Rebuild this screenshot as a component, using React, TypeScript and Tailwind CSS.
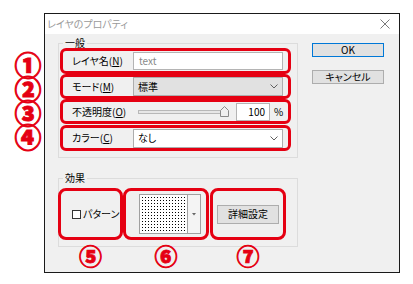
import React from "react";

const RED = "border-[#e50012]";

function Chevron() {
  return (
    <svg width="8" height="5" viewBox="0 0 8 5" className="shrink-0">
      <path d="M0.5 0.5 L4 4 L7.5 0.5" fill="none" stroke="#606060" strokeWidth="1" />
    </svg>
  );
}

function Row({ children, h = 25, extra = "" }: { children: React.ReactNode; h?: number; extra?: string }) {
  return (
    <div
      className={`ml-px w-[231px] border-[3px] ${RED} rounded-[6px] flex items-center pl-[9px] pr-[5px] ${extra}`}
      style={{ height: h }}
    >
      {children}
    </div>
  );
}

export default function App() {
  return (
    <div className="w-[413px] h-[284px] bg-white flex overflow-hidden font-['Noto_Sans_CJK_JP',sans-serif] [font-feature-settings:'palt'] text-[10px] leading-[12px] text-black">
      {/* left annotations */}
      <div className="w-[44px] shrink-0 pt-[53px] pl-[12px] flex flex-col text-[#e50012] font-black text-[27px] leading-[24px] [-webkit-text-stroke:0.9px_#e50012]">
        <div className="h-[24px] text-center">①</div>
        <div className="h-[24px] text-center">②</div>
        <div className="h-[24px] text-center">③</div>
        <div className="h-[24px] text-center">④</div>
      </div>

      {/* dialog */}
      <div className="mt-[13px] w-[356px] h-[260px] shrink-0 border border-[#1a1a1a] flex flex-col bg-[#f0f0f0]">
        <div className="h-[20px] bg-white flex items-center justify-between pl-[2px] pr-[9px]">
          <span className="text-[#9a9a9a]">レイヤのプロパティ</span>
          <svg width="10" height="10" viewBox="0 0 10 10">
            <path d="M0.5 0.5 L9.5 9.5 M9.5 0.5 L0.5 9.5" stroke="#7a7a7a" strokeWidth="1" />
          </svg>
        </div>

        <div className="flex pl-[13px]">
          <div className="w-[240px] shrink-0 flex flex-col pt-[3px]">
            {/* 一般 */}
            <fieldset className="border border-[#dcdcdc] pb-[6px]">
              <legend className="ml-[4px] px-[2px] leading-[12px]">一般</legend>
              <div className="flex flex-col -mt-px">
                <Row h={26}>
                  <div className="w-[61px] shrink-0">
                    レイヤ名(<span className="underline">N</span>)
                  </div>
                  <div className="w-[150px] h-[18px] bg-white border border-[#b4b4b4] flex items-center pl-[5px] text-[#8a8a8a]">
                    text
                  </div>
                </Row>
                <Row>
                  <div className="w-[61px] shrink-0">
                    モード(<span className="underline">M</span>)
                  </div>
                  <div className="w-[150px] h-[19px] bg-[#e1e1e1] border border-[#adadad] flex items-center justify-between pl-[4px] pr-[4px]">
                    <span>標準</span>
                    <Chevron />
                  </div>
                </Row>
                <Row>
                  <div className="w-[61px] shrink-0">
                    不透明度(<span className="underline">O</span>)
                  </div>
                  <div className="w-[150px] flex items-center">
                    <div className="ml-[5px] w-[91px] h-[12px] relative shrink-0">
                      <div className="absolute left-0 top-[4px] w-[88px] h-[4px] border border-[#b8b8b8] bg-[#e7e7e7]" />
                      <svg width="9" height="11" viewBox="0 0 9 11" className="absolute left-[82px] top-0">
                        <path d="M0.5 10.5 L0.5 4.5 L4.5 0.5 L8.5 4.5 L8.5 10.5 Z" fill="#f0f0f0" stroke="#8a8a8a" strokeWidth="1" />
                      </svg>
                    </div>
                    <div className="ml-[7px] w-[34px] h-[18px] shrink-0 bg-white border border-[#b4b4b4] flex items-center justify-end pr-[4px]">
                      100
                    </div>
                    <span className="ml-[4px]">%</span>
                  </div>
                </Row>
                <Row h={26} extra="mt-px">
                  <div className="w-[61px] shrink-0">
                    カラー(<span className="underline">C</span>)
                  </div>
                  <div className="w-[150px] h-[19px] bg-white border border-[#adadad] flex items-center justify-between pl-[4px] pr-[4px]">
                    <span>なし</span>
                    <Chevron />
                  </div>
                </Row>
              </div>
            </fieldset>

            {/* 効果 */}
            <fieldset className="mt-[14px] border border-[#dcdcdc] pb-[6px]">
              <legend className="ml-[4px] px-[2px] leading-[12px]">効果</legend>
              <div className="flex mt-[4px] -ml-px">
                <div className={`w-[65px] h-[52px] border-[3px] ${RED} rounded-[8px] flex items-center pl-[11px]`}>
                  <div className="w-[9px] h-[9px] border border-[#333] bg-white shrink-0" />
                  <span className="ml-[2px]">パターン</span>
                </div>
                <div className={`w-[86px] h-[52px] border-[3px] ${RED} rounded-[8px] flex items-center pl-[13px]`}>
                  <div className="w-[62px] h-[40px] border border-[#a0a0a0] bg-white flex">
                    <svg width="47" height="38" viewBox="0 0 47 38" className="shrink-0">
                      <defs>
                        <pattern id="dots" x="2" y="2" width="3" height="3" patternUnits="userSpaceOnUse">
                          <rect x="0" y="0" width="1" height="1" fill="#000" />
                        </pattern>
                      </defs>
                      <rect x="2" y="2" width="43" height="34" fill="url(#dots)" />
                    </svg>
                    <div className="flex-1 border-l border-[#a0a0a0] bg-[#f4f4f4] flex items-center justify-center">
                      <svg width="4" height="3" viewBox="0 0 4 3">
                        <path d="M0 0 L4 0 L2 2.5 Z" fill="#666" />
                      </svg>
                    </div>
                  </div>
                </div>
                <div className={`ml-px w-[76px] h-[52px] border-[3px] ${RED} rounded-[8px] flex items-center justify-center`}>
                  <div className="w-[62px] h-[19px] bg-[#e1e1e1] border border-[#adadad] flex items-center justify-center">
                    詳細設定
                  </div>
                </div>
              </div>
            </fieldset>
            <div className="flex -mt-[3px] text-[#e50012] font-black text-[23px] leading-[22px] [-webkit-text-stroke:0.8px_#e50012]">
              <div className="w-[65px] text-center">⑤</div>
              <div className="w-[86px] text-center">⑥</div>
              <div className="ml-px w-[76px] text-center">⑦</div>
            </div>
          </div>

          <div className="ml-[14px] pt-[9px] flex flex-col gap-[13px]">
            <div className="w-[72px] h-[14px] bg-[#e1e1e1] border border-[#0078d7] flex items-center justify-center">
              OK
            </div>
            <div className="w-[72px] h-[14px] bg-[#e1e1e1] border border-[#adadad] flex items-center justify-center">
              キャンセル
            </div>
          </div>
        </div>
      </div>
    </div>
  );
}
